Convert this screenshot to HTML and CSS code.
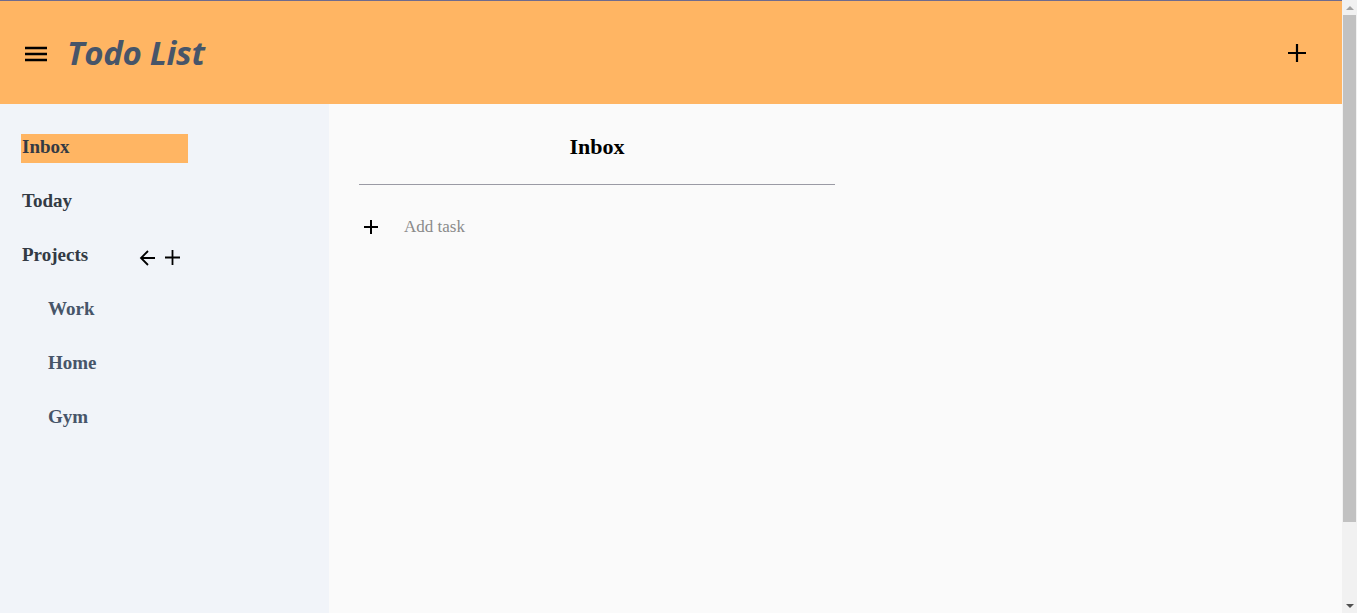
FILE: index.html
```html
<!DOCTYPE html>
<html lang="en">
<head>
<meta charset="utf-8">
<title>Todo List</title>
<link rel="stylesheet" href="styles.css">
</head>
<body>
<header class="topbar">
  <div class="brand">
    <button class="icon-btn menu-btn" aria-label="Menu">
      <svg width="22" height="16" viewBox="0 0 22 16"><path d="M0 2h22M0 8h22M0 14h22" stroke="#000" stroke-width="2.4" fill="none"/></svg>
    </button>
    <h1 class="title">Todo List</h1>
  </div>
  <button class="icon-btn add-btn" aria-label="Add">
    <svg width="20" height="20" viewBox="0 0 20 20"><path d="M10 1v18M1 10h18" stroke="#000" stroke-width="2.2" fill="none"/></svg>
  </button>
</header>
<div class="layout">
  <nav class="sidebar">
    <div class="nav-item active">Inbox</div>
    <div class="nav-item">Today</div>
    <div class="nav-item projects-row">
      <span class="projects-label">Projects</span>
      <span class="project-tools">
        <svg width="18" height="18" viewBox="0 0 18 18"><path d="M16 9H2M9 2L2 9l7 7" stroke="#000" stroke-width="1.8" fill="none"/></svg>
        <svg width="17" height="17" viewBox="0 0 17 17"><path d="M8.5 1v15M1 8.5h15" stroke="#000" stroke-width="1.8" fill="none"/></svg>
      </span>
    </div>
    <div class="nav-item sub">Work</div>
    <div class="nav-item sub">Home</div>
    <div class="nav-item sub">Gym</div>
  </nav>
  <main class="content">
    <section class="panel">
      <h2 class="panel-title">Inbox</h2>
      <div class="add-task">
        <svg width="16" height="16" viewBox="0 0 16 16"><path d="M8 1v14M1 8h14" stroke="#000" stroke-width="2" fill="none"/></svg>
        <span class="add-task-label">Add task</span>
      </div>
    </section>
  </main>
</div>
<div class="fake-scrollbar" aria-hidden="true">
  <span class="sb-arrow up"></span>
  <span class="sb-thumb"></span>
  <span class="sb-arrow down"></span>
</div>
</body>
</html>
```
FILE: styles.css
```css
html, body {
  margin: 0;
  padding: 0;
}
body {
  font-family: "Liberation Serif", "Times New Roman", serif;
  background: #fafafa;
  padding-right: 15px;
}
.topbar {
  height: 103px;
  border-top: 1px solid #6f6b8e;
  background: #ffb563;
  display: flex;
  align-items: center;
  justify-content: space-between;
  padding: 0 35px 0 25px;
}
.brand {
  display: flex;
  align-items: center;
  gap: 20px;
}
.icon-btn {
  background: none;
  border: 0;
  padding: 0;
  display: flex;
  align-items: center;
  cursor: pointer;
}
.menu-btn {
  margin-top: 2px;
}
.title {
  margin: 0;
  font-family: "Open Sans", sans-serif;
  font-style: italic;
  font-weight: 700;
  font-size: 33px;
  color: #475569;
  letter-spacing: -0.3px;
}
.layout {
  display: flex;
  min-height: 100vh;
}
.sidebar {
  width: 329px;
  flex: none;
  background: #f1f4f9;
  padding: 30px 0 0 21px;
  box-sizing: border-box;
  display: flex;
  flex-direction: column;
  gap: 25px;
}
.nav-item {
  height: 29px;
  width: 167px;
  display: flex;
  align-items: center;
  padding: 0 0 3px 1px;
  box-sizing: border-box;
  font-size: 19px;
  font-weight: 700;
  color: #333a44;
}
.nav-item.active {
  background: #ffb563;
}
.projects-label {
  width: 117px;
}
.project-tools {
  display: flex;
  align-items: center;
  gap: 7px;
  margin-top: 5px;
}
.nav-item.sub {
  padding-left: 27px;
  color: #475569;
}
.content {
  flex: 1;
  background: #fafafa;
  padding: 30px;
}
.panel {
  width: 476px;
}
.panel-title {
  margin: 0;
  height: 29px;
  line-height: 25px;
  text-align: center;
  font-size: 22px;
  font-weight: 700;
  color: #000;
  padding-bottom: 21px;
  border-bottom: 1px solid #9a9aa4;
}
.add-task {
  margin-top: 27px;
  height: 30px;
  display: flex;
  align-items: center;
  gap: 25px;
  padding-left: 4px;
}
.add-task-label {
  font-size: 17px;
  color: #8a8a8a;
}
.fake-scrollbar {
  position: fixed;
  top: 0;
  right: 0;
  bottom: 0;
  width: 15px;
  background: #f1f1f1;
  display: flex;
  flex-direction: column;
  align-items: center;
}
.sb-arrow {
  flex: none;
  height: 15px;
  width: 15px;
  display: flex;
  align-items: center;
  justify-content: center;
}
.sb-arrow::before {
  content: "";
  border-left: 4px solid transparent;
  border-right: 4px solid transparent;
}
.sb-arrow.up::before {
  border-bottom: 4px solid #a3a3a3;
}
.sb-arrow.down::before {
  border-top: 4px solid #505050;
}
.sb-thumb {
  width: 13px;
  height: 507px;
  background: #c1c1c1;
}
.sb-arrow.down {
  margin-top: auto;
}
```
